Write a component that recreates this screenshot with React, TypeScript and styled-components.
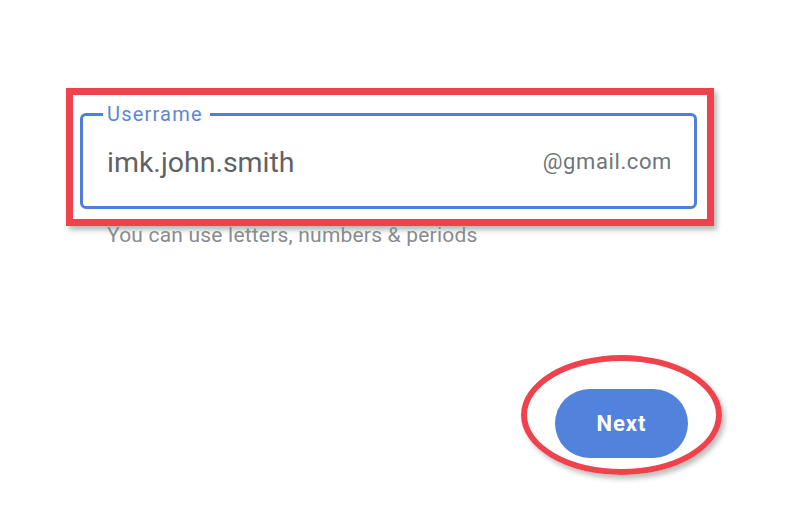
import styled, { createGlobalStyle } from 'styled-components';

const GlobalStyle = createGlobalStyle`
  html, body {
    margin: 0;
    padding: 0;
    background: #ffffff;
  }
  body {
    font-family: Roboto, "Liberation Sans", Arial, sans-serif;
  }
`;

const Page = styled.div`
  width: 800px;
  height: 527px;
  box-sizing: border-box;
  padding: 88px 0 0 66px;
  display: flex;
  flex-direction: column;
  overflow: hidden;
`;

const Highlight = styled.div`
  width: 648px;
  box-sizing: border-box;
  border: 7px solid #f0424d;
  padding: 18px 10px 10px 7px;
  box-shadow: 3px 4px 5px rgba(0, 0, 0, 0.28);
  background: #ffffff;
`;

const Field = styled.div`
  position: relative;
  height: 96px;
  box-sizing: border-box;
  border: 3px solid #4d80dc;
  border-radius: 6px;
  display: flex;
  align-items: center;
  justify-content: space-between;
  padding: 0 22px 0 24px;
`;

const Label = styled.span`
  position: absolute;
  top: -14px;
  left: 20px;
  padding: 0 7px 0 4px;
  background: #ffffff;
  color: #5b86dc;
  font-size: 20px;
  line-height: 24px;
  letter-spacing: 1.2px;
`;

const Value = styled.span`
  color: #5f6368;
  font-size: 28.5px;
  margin-top: 3px;
`;

const Suffix = styled.span`
  color: #70757a;
  font-size: 22px;
  letter-spacing: 0.6px;
  margin-top: 1px;
`;

const Helper = styled.div`
  margin-top: -3px;
  padding-left: 41px;
  color: #888b8f;
  font-size: 21px;
  line-height: 24px;
  letter-spacing: 0.2px;
`;

const Actions = styled.div`
  display: flex;
  justify-content: flex-end;
  width: 622px;
  margin-top: 142px;
`;

const Circled = styled.div`
  position: relative;
`;

const Ring = styled.div`
  position: absolute;
  left: -34px;
  top: -34px;
  width: 201px;
  height: 120px;
  box-sizing: border-box;
  border: 6px solid #f0424d;
  border-radius: 50%;
  box-shadow: 3px 4px 5px rgba(0, 0, 0, 0.25);
  pointer-events: none;
`;

const NextButton = styled.button`
  width: 133px;
  height: 69px;
  border: none;
  border-radius: 35px;
  background: #5283dc;
  color: #ffffff;
  font-family: Roboto, "Liberation Sans", Arial, sans-serif;
  font-size: 22px;
  font-weight: 700;
  letter-spacing: 1px;
  cursor: pointer;
`;

export default function App() {
  return (
    <>
      <GlobalStyle />
      <Page>
        <Highlight>
          <Field>
            <Label>Userrame</Label>
            <Value>imk.john.smith</Value>
            <Suffix>@gmail.com</Suffix>
          </Field>
        </Highlight>
        <Helper>You can use letters, numbers &amp; periods</Helper>
        <Actions>
          <Circled>
            <Ring />
            <NextButton>Next</NextButton>
          </Circled>
        </Actions>
      </Page>
    </>
  );
}
